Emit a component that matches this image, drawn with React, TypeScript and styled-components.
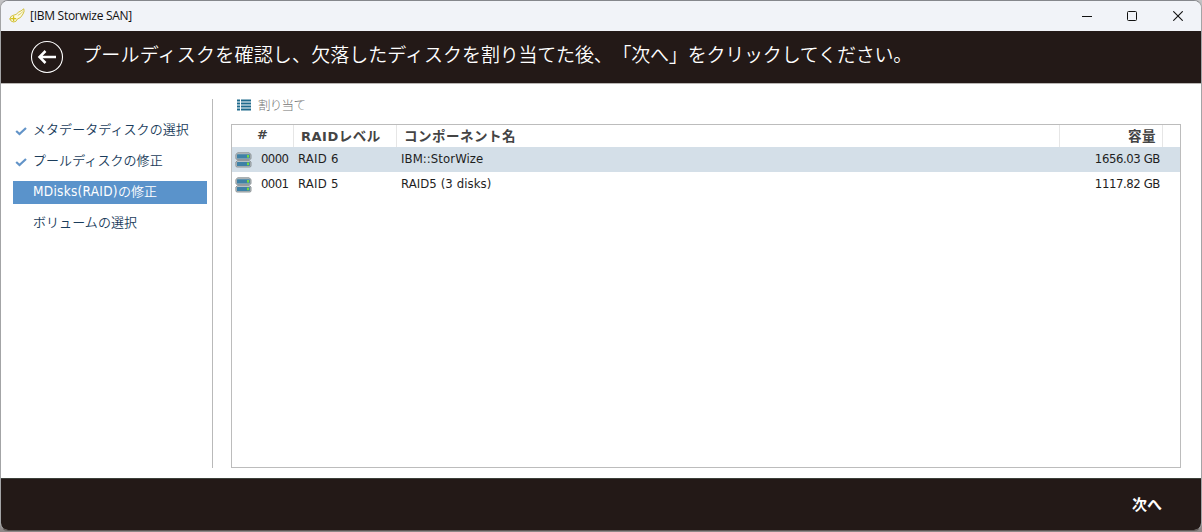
import React from "react";
import styled, { createGlobalStyle } from "styled-components";

const GlobalStyle = createGlobalStyle`
  * { box-sizing: border-box; }
  html, body { margin: 0; padding: 0; }
  body {
    background: #8f8b8a;
    font-family: "DejaVu Sans Condensed", "Noto Sans CJK JP", sans-serif;
    font-size: 13px;
    text-spacing-trim: space-all;
    white-space: nowrap;
    overflow: hidden;
  }
`;

const Frame = styled.div`
  width: 1202px;
  height: 532px;
  padding-bottom: 1px;
  background: linear-gradient(#c4c4c6 0, #a5a3a2 20px, #a5a3a2 480px, #8d8787 532px);
`;

const Window = styled.div`
  height: 531px;
  display: flex;
  flex-direction: column;
  border: 1px solid #a3a4a6;
  border-top-color: #85878c;
  border-bottom-color: #5e5856;
  border-radius: 8px;
  background: #fff;
  overflow: hidden;
`;

const TitleBar = styled.header`
  height: 30px;
  flex: none;
  display: flex;
  align-items: center;
  padding-left: 8px;
  background: #f1f3f8;
  color: #111;
`;

const Title = styled.span`
  flex: 1;
  padding-left: 5px;
  font: 12px/16px "Open Sans", sans-serif;
  letter-spacing: -0.27px;
`;

const WindowButton = styled.button`
  width: 46px;
  height: 30px;
  padding: 0;
  border: 0;
  background: none;
  display: grid;
  place-items: center;
`;

const Banner = styled.div`
  height: 52px;
  flex: none;
  display: flex;
  align-items: center;
  padding-left: 29px;
  background: #231917;
  color: #fff;
`;

const BackButton = styled.button`
  width: 34px;
  height: 34px;
  padding: 0;
  border: 0;
  background: none;
`;

const Heading = styled.h1`
  margin: 0 0 6px 18px;
  font: 350 19px/28px "Noto Sans CJK JP", sans-serif;
`;

const Tracked = styled.span<{ $gap: string }>`
  letter-spacing: ${(p) => p.$gap};
`;

const Body = styled.main`
  flex: 1;
  display: flex;
  padding: 15px 20px 10px 12px;
  border-top: 1px solid #b9b6b4;
`;

const Steps = styled.nav`
  width: 200px;
  padding: 20px 5px 0 0;
  border-right: 1px solid #b9b9b9;
`;

const Step = styled.div<{ $active?: boolean }>`
  height: 23px;
  margin-bottom: 8px;
  padding-bottom: 3px;
  display: flex;
  align-items: center;
  background: ${(p) => (p.$active ? "#5a93cb" : "transparent")};
  color: ${(p) => (p.$active ? "#fff" : "#1b3d5c")};
  line-height: 20px;
`;

const StepMark = styled.span`
  width: 20px;
  height: 11px;
  padding-left: 2px;
  line-height: 0;
`;

const StepLatin = styled.span`
  font-size: 13.5px;
  letter-spacing: 0.28px;
`;

const StepLabel = styled.span`
  font-family: "Noto Sans CJK JP", sans-serif;
  font-weight: 350;
  letter-spacing: 0.06px;
`;

const Content = styled.section`
  flex: 1;
  margin-left: 18px;
  display: flex;
  flex-direction: column;
`;

const Toolbar = styled.div`
  height: 25px;
  padding: 0 0 13px 6px;
  display: flex;
  align-items: center;
`;

const ToolLabel = styled.span`
  margin-left: 7px;
  color: #747474;
  font: 300 12.5px/12px "Noto Sans CJK JP", sans-serif;
  letter-spacing: -0.7px;
`;

const Grid = styled.div`
  flex: 1;
  border: 1px solid #bcbcbc;
`;

const HeadRow = styled.div`
  height: 22px;
  display: grid;
  grid-template-columns: 62px 103px 1fr 103px;
  padding-right: 17px;
  color: #444;
  font: 700 13px/20px "DejaVu Sans", "Noto Sans CJK JP", sans-serif;
`;

const HeadCell = styled.span<{ $left?: number; $right?: boolean }>`
  padding-left: ${(p) => p.$left ?? 0}px;
  padding-right: ${(p) => (p.$right ? 6 : 0)}px;
  text-align: ${(p) => (p.$right ? "right" : "left")};
  border-right: 1px solid #e6e6e6;
`;

const HeadKana = styled.span`
  font-family: "Noto Sans CJK JP", sans-serif;
  font-size: 13.5px;
  letter-spacing: 0.5px;
`;

const Row = styled.div<{ $selected?: boolean }>`
  height: 25px;
  display: grid;
  grid-template-columns: 29px 37px 103px 1fr 100px;
  align-items: center;
  padding-right: 20px;
  background: ${(p) => (p.$selected ? "#d4dfe8" : "#fff")};
  color: #1e1e1e;
  line-height: 22px;
`;

const Cell = styled.span<{ $right?: boolean; $gap?: string }>`
  padding-bottom: 2px;
  text-align: ${(p) => (p.$right ? "right" : "left")};
  letter-spacing: ${(p) => p.$gap ?? "0"};
`;

const IconCell = styled.span`
  display: flex;
  padding-left: 3px;
`;

const Footer = styled.footer`
  height: 52px;
  flex: none;
  display: flex;
  align-items: center;
  justify-content: flex-end;
  padding: 0 39px 2px 0;
  border-top: 1px solid #3c403a;
  background: #231917;
`;

const NextButton = styled.button`
  padding: 0;
  border: 0;
  background: none;
  color: #fff;
  font: 700 15px/20px "Noto Sans CJK JP", sans-serif;
`;

const WingIcon = () => (
  <svg width="16" height="16" viewBox="0 0 16 16" fill="none" stroke="#cdbb2e" strokeWidth=".9" strokeLinecap="round" strokeLinejoin="round">
    <path d="M1 11Q1 8 4 7.4Q7.5 7 9.5 4.2Q12 3.2 14.8 .8Q15.8 3.4 14 6L12.6 8L11.4 9.6L8.3 11Q7.6 14 4.6 14Q1.4 13.8 1 11Z" fill="#fbf9e2" />
    <path d="M9.2 7.2Q12 6 13.8 3.6" strokeWidth=".7" />
    <path d="M4.6 8.6v4.2M2.5 10.7h4.2" stroke="#d6c21a" strokeWidth="1.3" />
  </svg>
);

const CheckIcon = () => (
  <svg width="12" height="12" viewBox="0 0 12 12">
    <path d="M1.2 7L4.5 10L11 4" fill="none" stroke="#6394c8" strokeWidth="2.2" />
  </svg>
);

const ListIcon = () => (
  <svg width="14" height="12" viewBox="0 0 14 12" fill="#1f6a8c">
    {[0, 3, 6, 9].map((y) => (
      <g key={y}>
        <rect x="0" y={y + 0.5} width="3" height="2" />
        <rect x="4" y={y + 0.5} width="10" height="2" />
      </g>
    ))}
  </svg>
);

const DiskIcon = () => (
  <svg width="17" height="16" viewBox="0 0 17 16">
    {[0, 7.6].map((y) => (
      <g key={y}>
        <path d={`M2.8 ${y + 0.8}h11.2l2 1.6v3.8q0 1.2-1.2 1.2H2.1q-1.2 0-1.2-1.2V${y + 2.4}z`} fill="#b9c0c4" stroke="#858c90" strokeWidth=".9" />
        <rect x="2" y={y + 2.3} width="12.9" height="4.2" rx=".5" fill="#3f81a6" />
        <rect x="12" y={y + 3} width="2" height="2.6" fill="#76d93e" />
      </g>
    ))}
  </svg>
);

const steps = [
  { label: "メタデータディスクの選択", done: true },
  { label: "プールディスクの修正", done: true },
  { latin: "MDisks(RAID)", label: "の修正", active: true },
  { label: "ボリュームの選択" },
];

const disks = [
  { id: "0000", level: "RAID 6", name: "IBM::StorWize", size: "1656.03 GB", selected: true },
  { id: "0001", level: "RAID 5", name: "RAID5 (3 disks)", size: "1117.82 GB" },
];

export default function App() {
  return (
    <Frame>
      <GlobalStyle />
      <Window>
        <TitleBar>
          <WingIcon />
          <Title>[IBM Storwize SAN]</Title>
          <WindowButton aria-label="Minimize">
            <svg width="12" height="10"><path d="M2 5.5h10" stroke="#111" /></svg>
          </WindowButton>
          <WindowButton aria-label="Maximize">
            <svg width="10" height="10"><rect x=".5" y=".5" width="9" height="9" rx="1" fill="none" stroke="#111" /></svg>
          </WindowButton>
          <WindowButton aria-label="Close">
            <svg width="10" height="10"><path d="M.3.3l9.4 9.4M9.7.3L.3 9.7" stroke="#111" strokeWidth="1.1" /></svg>
          </WindowButton>
        </TitleBar>
        <Banner>
          <BackButton aria-label="Back">
            <svg width="34" height="34" viewBox="0 0 34 34" fill="none" stroke="#fff">
              <circle cx="17" cy="17" r="15.5" strokeWidth="1.1" />
              <path d="M26 17H10M15.5 11L9.5 17L15.5 23" strokeWidth="2.5" />
            </svg>
          </BackButton>
          <Heading>
            <Tracked $gap="0.22px">プールディスクを確認し、</Tracked>
            <Tracked $gap="0px">欠落したディスクを</Tracked>
            <Tracked $gap="-0.22px">割り当てた後、「</Tracked>
            <Tracked $gap="-0.2px">次へ」をクリックしてください。</Tracked>
          </Heading>
        </Banner>
        <Body>
          <Steps>
            {steps.map((s) => (
              <Step key={s.label} $active={s.active}>
                <StepMark>{s.done && <CheckIcon />}</StepMark>
                {s.latin && <StepLatin>{s.latin}</StepLatin>}
                <StepLabel>{s.label}</StepLabel>
              </Step>
            ))}
          </Steps>
          <Content>
            <Toolbar>
              <ListIcon />
              <ToolLabel>割り当て</ToolLabel>
            </Toolbar>
            <Grid>
              <HeadRow>
                <HeadCell $left={25}>#</HeadCell>
                <HeadCell $left={7}>
                  <Tracked $gap="0.5px">RAID</Tracked>
                  <HeadKana>レベル</HeadKana>
                </HeadCell>
                <HeadCell $left={7}><HeadKana>コンポーネント名</HeadKana></HeadCell>
                <HeadCell $right><HeadKana>容量</HeadKana></HeadCell>
              </HeadRow>
              {disks.map((d) => (
                <Row key={d.id} $selected={d.selected}>
                  <IconCell><DiskIcon /></IconCell>
                  <Cell $gap="-0.6px">{d.id}</Cell>
                  <Cell $gap="0.25px">{d.level}</Cell>
                  <Cell $gap="0.08px">{d.name}</Cell>
                  <Cell $right $gap="-0.4px">{d.size}</Cell>
                </Row>
              ))}
            </Grid>
          </Content>
        </Body>
        <Footer>
          <NextButton>次へ</NextButton>
        </Footer>
      </Window>
    </Frame>
  );
}
